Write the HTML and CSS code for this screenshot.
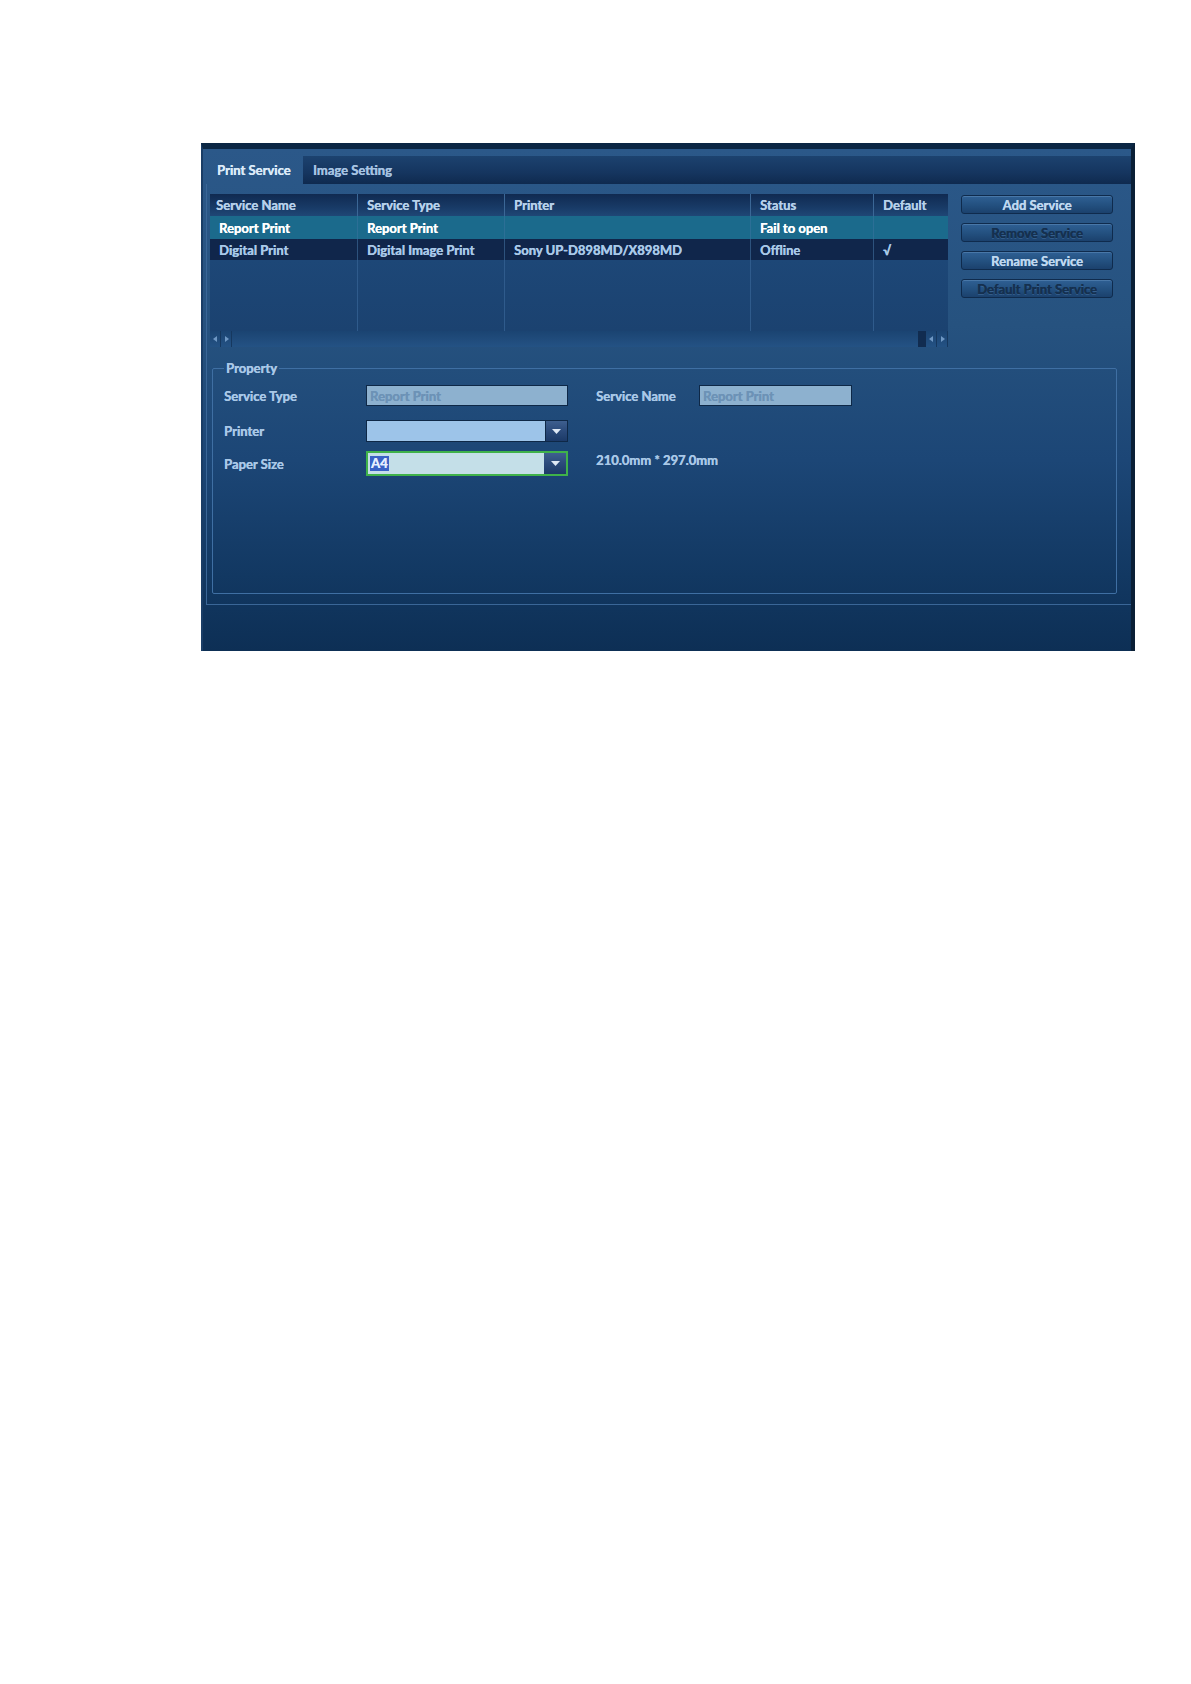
FILE: index.html
```html
<!DOCTYPE html>
<html lang="en">
<head>
<meta charset="utf-8">
<title>Print Service</title>
<link rel="stylesheet" href="styles.css">
</head>
<body>
<div class="panel">
  <div class="tabs">
    <div class="tab active">Print Service</div>
    <div class="tab rest">Image Setting</div>
  </div>
  <div class="body">
    <div class="toprow">
      <div class="table">
        <div class="row head">
          <div class="c c1">Service Name</div>
          <div class="c c2">Service Type</div>
          <div class="c c3">Printer</div>
          <div class="c c4">Status</div>
          <div class="c c5">Default</div>
        </div>
        <div class="row sel">
          <div class="c c1">Report Print</div>
          <div class="c c2">Report Print</div>
          <div class="c c3"></div>
          <div class="c c4">Fail to open</div>
          <div class="c c5"></div>
        </div>
        <div class="row dark">
          <div class="c c1">Digital Print</div>
          <div class="c c2">Digital Image Print</div>
          <div class="c c3">Sony UP-D898MD/X898MD</div>
          <div class="c c4">Offline</div>
          <div class="c c5">√</div>
        </div>
        <div class="row filler">
          <div class="c c1"></div>
          <div class="c c2"></div>
          <div class="c c3"></div>
          <div class="c c4"></div>
          <div class="c c5"></div>
        </div>
        <div class="hscroll">
          <span class="arr"><svg width="5" height="6" viewBox="0 0 5 6"><path d="M4 0 L0 3 L4 6Z" fill="#6f98c4"/></svg></span>
          <span class="arr"><svg width="5" height="6" viewBox="0 0 5 6"><path d="M1 0 L5 3 L1 6Z" fill="#6f98c4"/></svg></span>
          <span class="track"></span>
          <span class="thumb"></span>
          <span class="arr"><svg width="5" height="6" viewBox="0 0 5 6"><path d="M4 0 L0 3 L4 6Z" fill="#6f98c4"/></svg></span>
          <span class="arr"><svg width="5" height="6" viewBox="0 0 5 6"><path d="M1 0 L5 3 L1 6Z" fill="#6f98c4"/></svg></span>
        </div>
      </div>
      <div class="buttons">
        <div class="btn">Add Service</div>
        <div class="btn disabled">Remove Service</div>
        <div class="btn">Rename Service</div>
        <div class="btn disabled">Default Print Service</div>
      </div>
    </div>
    <fieldset class="prop">
      <legend>Property</legend>
      <div class="frow r1">
        <div class="lbl">Service Type</div>
        <div class="inp ro">Report Print</div>
        <div class="lbl lbl2">Service Name</div>
        <div class="inp ro inp2">Report Print</div>
      </div>
      <div class="frow r2">
        <div class="lbl">Printer</div>
        <div class="combo printer">
          <span class="val"></span>
          <span class="drop"><svg width="9" height="5" viewBox="0 0 9 5"><path d="M0 0 H9 L4.5 5Z" fill="#dfe9f5"/></svg></span>
        </div>
      </div>
      <div class="frow r3">
        <div class="lbl">Paper Size</div>
        <div class="combo paper">
          <span class="val"><span class="hl">A4</span></span>
          <span class="drop"><svg width="9" height="5" viewBox="0 0 9 5"><path d="M0 0 H9 L4.5 5Z" fill="#dfe9f5"/></svg></span>
        </div>
        <div class="dim">210.0mm * 297.0mm</div>
      </div>
    </fieldset>
  </div>
</div>
</body>
</html>
```
FILE: styles.css
```css
* { box-sizing: border-box; }
html, body { margin: 0; padding: 0; background: #ffffff; }
body {
  font-family: Lato, "Open Sans", "Liberation Sans", sans-serif;
  font-weight: 700;
  font-size: 13px;
}
.panel {
  margin: 143px 0 0 201px;
  width: 934px;
  height: 508px;
  border-top: 6px solid #0b2744;
  border-right: 4px solid #0a1f36;
  border-left: 2px solid #1a3d66;
  background: linear-gradient(180deg, #2b5889 0%, #26527f 35%, #1c4676 62%, #123862 85%, #0d2f55 100%);
  display: flex;
  flex-direction: column;
  text-shadow: 0.35px 0 0 currentColor;
}
.tabs {
  margin-top: 7px;
  height: 28px;
  display: flex;
}
.tab {
  display: flex;
  align-items: center;
  padding-left: 14px;
  color: #a6c3e2;
}
.tab.active {
  width: 100px;
  color: #dbeaf8;
}
.tab.rest {
  flex: 1;
  padding-left: 10px;
  background: linear-gradient(180deg, #1c426f 0%, #15355f 60%, #0f2a4f 100%);
}
.body {
  margin-left: 3px;
  height: 421px;
  border-left: 1px solid #3a6697;
  border-bottom: 1px solid #3a6697;
  padding: 10px 0 0 3px;
}
.toprow {
  display: flex;
}
.table {
  width: 738px;
}
.row {
  display: flex;
}
.c {
  display: flex;
  align-items: center;
  padding-left: 9px;
  border-left: 1px solid #2f5b8c;
  white-space: nowrap;
}
.c1 { width: 147px; border-left: none; }
.c2 { width: 147px; }
.c3 { width: 246px; }
.c4 { width: 123px; }
.c5 { width: 75px; }
.head { height: 22px; background: linear-gradient(180deg, #102a51 0%, #183a66 60%, #1f4776 100%); color: #b6d0ea; }
.head .c1 { padding-left: 6px; }
.head .c { border-left-color: #3b6796; }
.sel { height: 23px; background: #1b6a8c; color: #ffffff; }
.sel .c { border-left-color: #2c6f96; }
.dark { height: 21px; background: #10264b; color: #a9c9e8; }
.dark .c { border-left-color: #2d527d; }
.filler { height: 71px; background: linear-gradient(180deg, #1d4777 0%, #1b4270 100%); }
.hscroll {
  height: 16px;
  display: flex;
  background: linear-gradient(180deg, #1b4472 0%, #245284 100%);
}
.arr {
  width: 11px;
  display: flex;
  align-items: center;
  justify-content: center;
  border-right: 1px solid #16385f;
}
.track { flex: 1; }
.thumb { width: 8px; background: #112c50; }
.buttons {
  margin-left: 13px;
  margin-top: 1px;
  width: 152px;
  display: flex;
  flex-direction: column;
  gap: 9px;
}
.btn {
  height: 19px;
  border: 1px solid #0f2b4d;
  border-radius: 3px;
  background: linear-gradient(180deg, #2f6094 0%, #23507f 55%, #1b416d 100%);
  box-shadow: inset 0 1px 0 rgba(150, 190, 230, 0.25);
  display: flex;
  align-items: center;
  justify-content: center;
  color: #bed7ef;
  white-space: nowrap;
}
.btn.disabled {
  color: #15304f;
  text-shadow: 0.35px 0 0 #15304f, 0 1px 0 rgba(110, 150, 195, 0.3);
}
.prop {
  margin: 13px 0 0 2px;
  width: 905px;
  height: 234px;
  border: 1px solid #3f6fa3;
  border-radius: 2px;
  padding: 9px 0 0 11px;
  min-width: 0;
}
.prop legend {
  padding: 0 2px;
  margin-left: 0;
  line-height: 16px;
  color: #a9c8e7;
}
.frow {
  display: flex;
  align-items: center;
}
.r1 { height: 21px; margin-bottom: 14px; }
.r2 { height: 22px; margin-bottom: 9px; }
.r3 { height: 25px; }
.lbl {
  width: 142px;
  color: #a9c8e7;
}
.lbl2 { width: 103px; margin-left: 28px; }
.inp {
  height: 21px;
  width: 202px;
  border: 1px solid #0e2847;
  display: flex;
  align-items: center;
  padding-left: 3px;
}
.inp.ro {
  background: #8db1cf;
  color: #6c92b6;
}
.inp2 { width: 153px; }
.combo {
  width: 202px;
  display: flex;
  border: 1px solid #0e2847;
}
.combo .val {
  flex: 1;
  display: flex;
  align-items: center;
  padding-left: 2px;
}
.combo .drop {
  width: 22px;
  display: flex;
  align-items: center;
  justify-content: center;
  background: linear-gradient(180deg, #3e5f8f 0%, #2b4a7a 50%, #1c3a68 100%);
  border-left: 1px solid #0e2847;
}
.printer { height: 22px; }
.printer .val { background: #9dc4e9; }
.paper {
  height: 25px;
  border: 2px solid #3fb24a;
}
.paper .val { background: #c4dfe8; }
.paper .drop { border-left: none; }
.hl {
  background: #3a62c6;
  color: #e6eeff;
  padding: 0 1px;
  line-height: 15px;
}
.dim {
  margin-left: 28px;
  margin-top: -7px;
  color: #a9c8e7;
}
```
